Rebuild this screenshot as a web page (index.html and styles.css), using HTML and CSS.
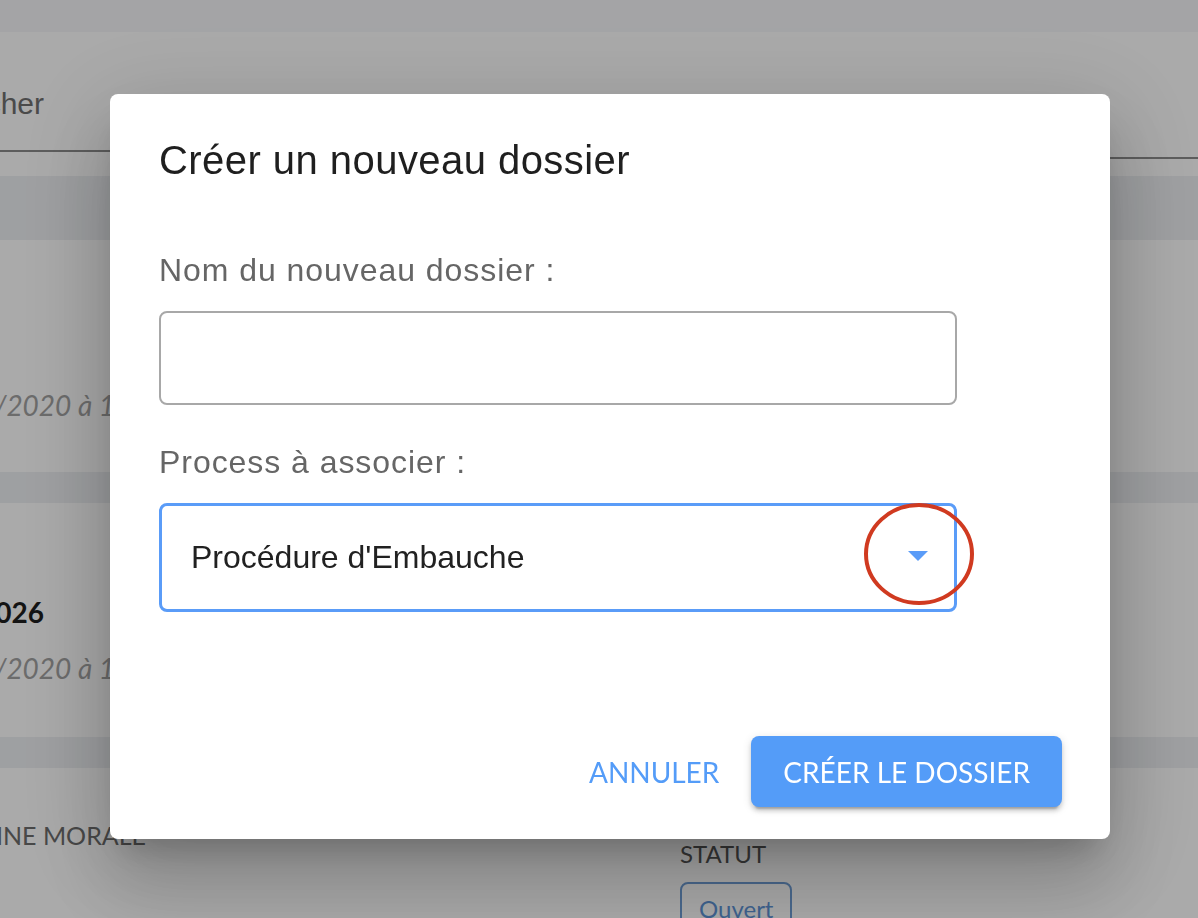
FILE: index.html
```html
<!DOCTYPE html>
<html lang="fr">
<head>
<meta charset="utf-8">
<title>Créer un nouveau dossier</title>
<link rel="stylesheet" href="styles.css">
</head>
<body>
<div class="page">
  <header class="topbar"></header>
  <div class="toolbar">
    <div class="search"><span class="search-text">Rechercher</span></div>
    <div class="filter"></div>
  </div>
  <div class="band band-lg"></div>
  <div class="row row-1">
    <div class="meta"><span>Créé le 12/03/2020 à 1</span></div>
  </div>
  <div class="band"></div>
  <div class="row row-2">
    <div class="ref"><span>N° 2020-026</span></div>
    <div class="meta"><span>Créé le 12/03/2020 à 1</span></div>
  </div>
  <div class="band"></div>
  <div class="row row-3">
    <div class="col-type"><span>PERSONNE MORALE</span></div>
    <div class="col-status">
      <div class="status-label">STATUT</div>
      <div class="badge">Ouvert</div>
    </div>
  </div>
</div>

<div class="backdrop"></div>

<div class="dialog" role="dialog">
  <h2 class="dialog-title">Créer un nouveau dossier</h2>
  <label class="field-label label-first">Nom du nouveau dossier :</label>
  <div class="text-input"></div>
  <label class="field-label label-second">Process à associer :</label>
  <div class="select">
    <span class="select-value">Procédure d'Embauche</span>
    <svg class="select-arrow" width="20" height="10" viewBox="7 10 10 5"><path d="M7 10l5 5 5-5z"/></svg>
  </div>
  <div class="actions">
    <button class="btn btn-text">Annuler</button>
    <button class="btn btn-contained">Créer le dossier</button>
  </div>
</div>

<svg class="annotation" width="112" height="104" viewBox="0 0 112 104"><ellipse cx="55" cy="51" rx="53" ry="49"/></svg>
</body>
</html>
```

FILE: styles.css
```css
html, body {
  margin: 0;
  padding: 0;
}
body {
  width: 1198px;
  height: 918px;
  overflow: hidden;
  background: #ffffff;
  font-family: "Liberation Sans", Arial, sans-serif;
  position: relative;
}

/* ---------- underlying page ---------- */
.page {
  display: flex;
  flex-direction: column;
  height: 918px;
  font-family: Lato, "Liberation Sans", sans-serif;
}
.topbar {
  height: 32px;
  background: #f6f7fa;
  flex: none;
}
.toolbar {
  display: flex;
  height: 144px;
  flex: none;
  align-items: flex-start;
}
.search {
  width: 600px;
  height: 120px;
  box-sizing: border-box;
  border-bottom: 2px solid #8c8c8c;
  display: flex;
  align-items: center;
  padding-top: 26px;
}
.search-text {
  display: flex;
  justify-content: flex-end;
  width: 44px;
  overflow: hidden;
  white-space: nowrap;
  font-family: "Liberation Sans", Arial, sans-serif;
  font-size: 30px;
  color: #707070;
}
.filter {
  flex: 1;
  height: 125px;
  border-bottom: 2px solid #8c8c8c;
}
.band {
  height: 31px;
  background: #eef0f3;
  flex: none;
}
.band-lg {
  height: 64px;
}
.row {
  flex: none;
  box-sizing: border-box;
}
.row-1 {
  height: 232px;
  padding-top: 148px;
}
.row-2 {
  height: 234px;
  padding-top: 92px;
}
.row-3 {
  flex: 1;
  display: flex;
  padding-top: 52px;
}
.meta, .ref, .col-type {
  display: flex;
  justify-content: flex-end;
  overflow: hidden;
  white-space: nowrap;
}
.meta {
  width: 115px;
  font-size: 28px;
  line-height: 34px;
  font-style: italic;
  color: #a2a2a2;
}
.row-2 .meta {
  margin-top: 22px;
}
.ref {
  width: 44px;
  font-size: 28px;
  line-height: 34px;
  font-weight: 700;
  color: #1e1e1e;
}
.col-type {
  width: 146px;
  font-size: 25px;
  line-height: 30px;
  color: #6c6c6c;
}
.col-status {
  margin-left: 534px;
  padding-top: 19px;
  display: flex;
  flex-direction: column;
  align-items: flex-start;
}
.status-label {
  font-size: 24px;
  line-height: 30px;
  color: #555555;
}
.badge {
  margin-top: 13px;
  border: 2px solid #6f9ed6;
  border-radius: 8px;
  padding: 9px 17px;
  font-size: 24px;
  line-height: 32px;
  color: #5f95d8;
}

/* ---------- backdrop ---------- */
.backdrop {
  position: fixed;
  inset: 0;
  background: rgba(0, 0, 0, 0.333);
}

/* ---------- dialog ---------- */
.dialog {
  position: fixed;
  left: 110px;
  top: 94px;
  width: 1000px;
  height: 745px;
  box-sizing: border-box;
  background: #ffffff;
  border-radius: 8px;
  box-shadow: 0 22px 30px -14px rgba(0,0,0,0.2), 0 48px 76px 6px rgba(0,0,0,0.14), 0 18px 92px 16px rgba(0,0,0,0.12);
  padding: 42px 48px 32px 49px;
  display: flex;
  flex-direction: column;
}
.dialog-title {
  margin: 0;
  font-family: "Liberation Sans", Arial, sans-serif;
  font-weight: 400;
  font-size: 40px;
  line-height: 48px;
  letter-spacing: 0.45px;
  color: #1f1f1f;
}
.field-label {
  display: block;
  font-family: "Liberation Sans", Arial, sans-serif;
  font-size: 32px;
  line-height: 40px;
  letter-spacing: 0.95px;
  color: #666666;
}
.label-first {
  margin-top: 66px;
}
.label-second {
  margin-top: 37px;
}
.text-input {
  margin-top: 21px;
  width: 798px;
  height: 94px;
  box-sizing: border-box;
  border: 2px solid #a8a8a8;
  border-radius: 8px;
}
.select {
  margin-top: 21px;
  width: 798px;
  height: 109px;
  box-sizing: border-box;
  border: 3px solid #5a9cf8;
  border-radius: 8px;
  padding: 0 26px 0 29px;
  display: flex;
  align-items: center;
  justify-content: space-between;
}
.select-value {
  font-family: "Liberation Sans", Arial, sans-serif;
  font-size: 32px;
  color: #212121;
}
.select-arrow {
  fill: #5a9cf8;
  margin-top: -4px;
}
.actions {
  margin-top: auto;
  display: flex;
  justify-content: flex-end;
  align-items: center;
  gap: 16px;
}
.btn {
  font-family: Lato, "Liberation Sans", sans-serif;
  font-size: 28px;
  letter-spacing: 0;
  text-transform: uppercase;
  border: none;
  cursor: pointer;
  border-radius: 8px;
  height: 71px;
  box-sizing: border-box;
}
.btn-text {
  background: transparent;
  color: #549cf8;
  padding: 0 16px;
}
.btn-contained {
  background: #549cf8;
  color: #ffffff;
  padding: 0 32px;
  box-shadow: 0 6px 2px -4px rgba(0,0,0,0.2), 0 4px 4px 0 rgba(0,0,0,0.14), 0 2px 10px 0 rgba(0,0,0,0.12);
}

/* ---------- annotation ---------- */
.annotation {
  position: fixed;
  left: 864px;
  top: 503px;
  fill: none;
  stroke: #d03a20;
  stroke-width: 4;
}
```
